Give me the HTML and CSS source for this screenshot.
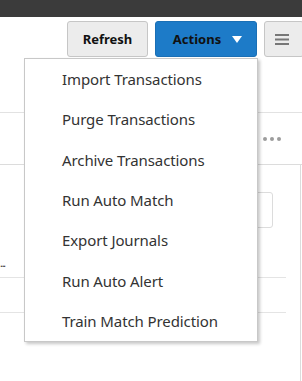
FILE: index.html
```html
<!DOCTYPE html>
<html>
<head>
<meta charset="utf-8">
<link rel="stylesheet" href="styles.css">
</head>
<body>
<div class="page">
  <div class="topbar"></div>
  <div class="toolbar">
    <button class="btn btn-default">Refresh</button>
    <button class="btn btn-primary">Actions <span class="caret"></span></button>
    <button class="btn btn-default btn-icon" aria-label="Menu">
      <svg width="14" height="11" viewBox="0 0 14 11"><rect x="0" y="0" width="14" height="2" fill="#777"/><rect x="0" y="4.5" width="14" height="2" fill="#777"/><rect x="0" y="9" width="14" height="2" fill="#777"/></svg>
    </button>
  </div>
  <div class="row-gap"></div>
  <div class="row-more">
    <span class="more"><i></i><i></i><i></i></span>
  </div>
  <div class="panel">
    <div class="panel-input"><div class="input"></div></div>
    <div class="panel-text">...</div>
    <div class="panel-line"></div>
    <div class="panel-line second"></div>
  </div>

  <ul class="menu">
    <li>Import Transactions</li>
    <li>Purge Transactions</li>
    <li>Archive Transactions</li>
    <li>Run Auto Match</li>
    <li>Export Journals</li>
    <li>Run Auto Alert</li>
    <li>Train Match Prediction</li>
  </ul>
</div>
</body>
</html>
```
FILE: styles.css
```css
html, body {
  margin: 0;
  padding: 0;
  background: #fff;
}
.page {
  position: relative;
  width: 302px;
  height: 381px;
  overflow: hidden;
  font-family: "Noto Sans", "Open Sans", sans-serif;
}
.topbar {
  height: 17px;
  background: #3b3b3b;
}
.toolbar {
  display: flex;
  gap: 7px;
  padding: 4px 0 0 67px;
  height: 36px;
}
.btn {
  box-sizing: border-box;
  height: 36px;
  border-radius: 3px;
  font-family: "Noto Sans", sans-serif;
  font-weight: 700;
  font-size: 13px;
  color: #111;
  padding: 0;
  display: flex;
  align-items: center;
  justify-content: center;
  flex: none;
}
.btn-default {
  width: 81px;
  background: #ececec;
  border: 1px solid #c6c6c6;
}
.btn-primary {
  width: 102px;
  background: #1d7bc8;
  border: 1px solid #1a6fb5;
  gap: 11px;
  padding-left: 3px;
}
.caret {
  width: 0;
  height: 0;
  border-left: 5.5px solid transparent;
  border-right: 5.5px solid transparent;
  border-top: 7px solid #fff;
}
.btn-icon {
  width: 40px;
  justify-content: flex-start;
  padding-left: 10px;
}
.row-gap {
  height: 55px;
  border-bottom: 1px solid #e2e2e2;
}
.row-more {
  height: 51px;
  border-bottom: 1px solid #dcdcdc;
  display: flex;
  align-items: center;
  padding-left: 263px;
}
.more {
  display: flex;
  gap: 3px;
}
.more i {
  width: 4px;
  height: 4px;
  border-radius: 50%;
  background: #9c9c9c;
}
.panel {
  width: 300px;
  height: 220px;
  border-right: 1px solid #dcdcdc;
}
.panel-input {
  padding: 27px 27px 0 0;
  display: flex;
  justify-content: flex-end;
}
.input {
  width: 60px;
  height: 34px;
  border: 1px solid #dcdcdc;
  border-radius: 3px;
}
.panel-text {
  margin-top: 29px;
  height: 19px;
  font-size: 10px;
  line-height: 12px;
  letter-spacing: -1px;
  color: #222;
}
.panel-line {
  width: 286px;
  height: 0;
  border-top: 1px solid #e4e4e4;
  margin-top: 1px;
}
.panel-line.second {
  margin-top: 34px;
}
.menu {
  position: absolute;
  left: 24px;
  top: 58px;
  width: 232px;
  margin: 0;
  padding: 0;
  list-style: none;
  background: #fff;
  border: 1px solid #c8c8c8;
  box-shadow: 2px 2px 3px rgba(0, 0, 0, 0.22);
}
.menu li {
  height: 40.33px;
  display: flex;
  align-items: center;
  padding-left: 37px;
  font-size: 15px;
  letter-spacing: -0.1px;
  color: #333;
}
```
